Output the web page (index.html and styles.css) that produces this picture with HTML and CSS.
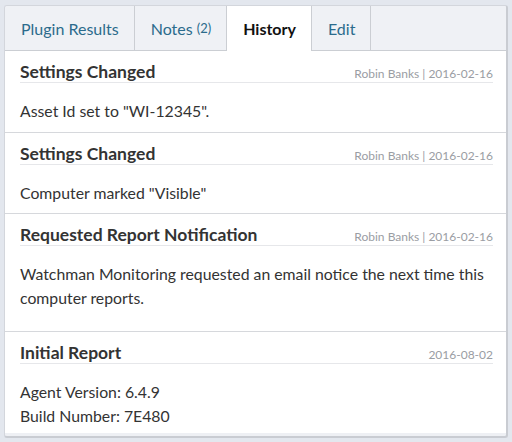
FILE: index.html
```html
<!DOCTYPE html>
<html>
<head>
<meta charset="utf-8">
<link rel="stylesheet" href="styles.css">
</head>
<body>
<div class="panel">
  <div class="tabs">
    <div class="tab">Plugin Results</div>
    <div class="tab">Notes <span class="count">(2)</span></div>
    <div class="tab active">History</div>
    <div class="tab">Edit</div>
    <div class="tab-fill"></div>
  </div>
  <div class="content">
    <div class="entry">
      <div class="head"><span class="title">Settings Changed</span><span class="meta">Robin Banks | 2016-02-16</span></div>
      <div class="body">Asset Id set to "WI-12345".</div>
    </div>
    <div class="entry short">
      <div class="head"><span class="title">Settings Changed</span><span class="meta">Robin Banks | 2016-02-16</span></div>
      <div class="body">Computer marked "Visible"</div>
    </div>
    <div class="entry tall">
      <div class="head"><span class="title">Requested Report Notification</span><span class="meta">Robin Banks | 2016-02-16</span></div>
      <div class="body">Watchman Monitoring requested an email notice the next time this computer reports.</div>
    </div>
    <div class="entry last">
      <div class="head"><span class="title">Initial Report</span><span class="meta">2016-08-02</span></div>
      <div class="body">Agent Version: 6.4.9<br>Build Number: 7E480</div>
    </div>
  </div>
</div>
</body>
</html>
```

FILE: styles.css
```css
html, body {
  margin: 0;
  padding: 0;
}
body {
  background: #e3e7ee;
  font-family: Lato, "Open Sans", sans-serif;
  color: #333;
  padding: 5px 4px 0 4px;
}
.panel {
  background: #eef0f4;
  border: 1px solid #d3d6dc;
  border-right: 2px solid #c9ccd2;
  border-bottom: 2px solid #c9ccd2;
  border-radius: 3px;
  padding-bottom: 3px;
  overflow: hidden;
}
.tabs {
  display: flex;
  height: 44px;
  background: #eff1f5;
  border-bottom: 1px solid #cbced3;
}
.tab {
  display: flex;
  align-items: center;
  padding: 0 15px 0 16px;
  font-size: 16px;
  color: #2b6b8c;
  border-right: 1px solid #cbced3;
  white-space: nowrap;
}
.tab .count {
  font-size: 13px;
  margin-left: 4px;
}
.tab.active {
  background: #fff;
  color: #111;
  font-weight: bold;
  margin-bottom: -1px;
  height: 45px;
}
.tab-fill {
  flex: 1;
}
.content {
  background: #fff;
}
.entry {
  padding: 11px 13px 9px 15px;
  border-bottom: 1px solid #d6d8dc;
}
.entry.short {
  padding-bottom: 8px;
}
.entry.tall {
  padding-bottom: 21px;
}
.entry.last {
  border-bottom: none;
  padding-bottom: 5px;
}
.head {
  display: flex;
  justify-content: space-between;
  align-items: baseline;
  height: 20px;
  line-height: 20px;
  border-bottom: 1px solid #e6e7ea;
}
.title {
  font-weight: bold;
  font-size: 17.5px;
  color: #333;
}
.meta {
  font-size: 12px;
  color: #9a9da3;
}
.body {
  margin-top: 16px;
  font-size: 15.8px;
  line-height: 24px;
  color: #333;
}
```
